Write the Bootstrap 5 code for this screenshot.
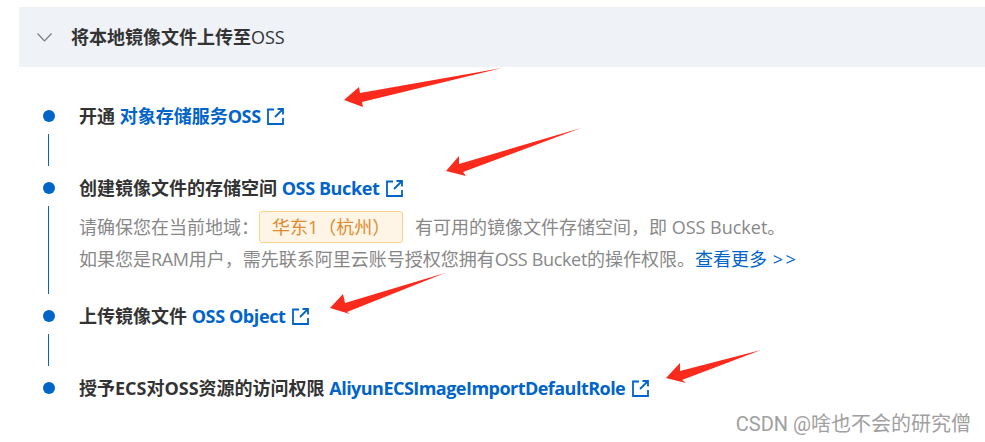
<!DOCTYPE html>
<html lang="zh-CN">
<head>
  <meta charset="UTF-8" />
  <meta name="viewport" content="width=device-width, initial-scale=1.0" />
  <title>将本地镜像文件上传至OSS</title>
  <link href="https://cdn.jsdelivr.net/npm/bootstrap@5.3.3/dist/css/bootstrap.min.css" rel="stylesheet">
  <style>
    html, body { height: 442px; overflow: hidden; }
    body {
      background: #fff;
      font-family: "Open Sans", "Noto Sans CJK SC", sans-serif;
      font-size: 18px;
      color: #333;
    }
    .page-wrap { padding: 7px 0 0 19px; }
    .panel-head {
      height: 60px;
      background: #eff2f7;
      padding-left: 18px;
      gap: 20px;
    }
    .panel-title { font-size: 18px; font-weight: 700; color: #333; margin-left: -1px; }
    .panel-title span { font-weight: 400; }
    .step-list { margin: 31px 0 0 43px; padding: 0; list-style: none; }
    .step-head { height: 36px; }
    .step-dot {
      width: 12px; height: 12px; border-radius: 50%;
      background: #0064c8; flex: none; margin-right: 24px;
    }
    .step-title { font-weight: 700; line-height: 36px; white-space: nowrap; }
    .step-title a, .more-link { color: #0064c8; text-decoration: none; }
    .tight-bold { letter-spacing: -.4px; }
    .tight-long { letter-spacing: -.53px; }
    .tight-text { letter-spacing: -.34px; }
    .ext-icon { width: 17px; height: 17px; margin-left: 2px; vertical-align: -2px; }
    .step-body { margin-left: 5px; padding-bottom: 4px; }
    .step-rail { width: 1px; background: #0064c8; flex: none; margin-right: 30px; }
    .step-copy { min-height: 32px; padding: 5px 0 19px; color: #888; }
    .copy-line { height: 32px; line-height: 32px; white-space: nowrap; }
    .region-tag {
      display: inline-block; height: 32px; line-height: 30px;
      padding: 0 12px; margin: 0 7px 0 0;
      background: #fff5e6; border: 1px solid #fbd38d; border-radius: 3px;
      color: #e08a2e;
    }
    .more-arrows { letter-spacing: 2.5px; margin-left: 1px; }
    .arrow-layer { position: absolute; left: 0; top: 0; pointer-events: none; }
    .mark-text {
      position: absolute; right: 14px; top: 409px;
      font-family: "Roboto", "Noto Sans CJK SC", sans-serif;
      font-size: 20px; line-height: 30px; color: #a0a0a0;
    }
  </style>
</head>
<body>
  <div class="page-wrap">
    <div class="panel-head d-flex align-items-center">
      <svg width="15" height="9" viewBox="0 0 15 9"><path d="M.5.5l7 7.5 7-7.5" fill="none" stroke="#777" stroke-width="1.1"/></svg>
      <div class="panel-title">将本地镜像文件上传至<span>OSS</span></div>
    </div>
  </div>

  <ol class="step-list">
    <li>
      <div class="step-head d-flex align-items-center">
        <i class="step-dot"></i>
        <div class="step-title">开通 <a href="#">对象存储服务<span class="tight-bold">OSS</span> <svg class="ext-icon" viewBox="0 0 17 17"><use href="#ext"/></svg></a></div>
      </div>
      <div class="step-body d-flex"><div class="step-rail"></div><div class="step-copy"></div></div>
    </li>
    <li>
      <div class="step-head d-flex align-items-center">
        <i class="step-dot"></i>
        <div class="step-title">创建镜像文件的存储空间 <a href="#"><span class="tight-bold">OSS Bucket</span> <svg class="ext-icon" viewBox="0 0 17 17"><use href="#ext"/></svg></a></div>
      </div>
      <div class="step-body d-flex">
        <div class="step-rail"></div>
        <div class="step-copy">
          <div class="copy-line">请确保您在当前地域：<span class="region-tag">华东1（杭州）</span> 有可用的镜像文件存储空间，即 OSS Bucket。</div>
          <div class="copy-line">如果您是<span class="tight-text">RAM</span>用户，需先联系阿里云账号授权您拥有<span class="tight-text">OSS Bucket</span>的操作权限。<a class="more-link" href="#">查看更多 <span class="more-arrows">&gt;&gt;</span></a></div>
        </div>
      </div>
    </li>
    <li>
      <div class="step-head d-flex align-items-center">
        <i class="step-dot"></i>
        <div class="step-title">上传镜像文件 <a href="#"><span class="tight-bold">OSS Object</span> <svg class="ext-icon" viewBox="0 0 17 17"><use href="#ext"/></svg></a></div>
      </div>
      <div class="step-body d-flex"><div class="step-rail"></div><div class="step-copy"></div></div>
    </li>
    <li>
      <div class="step-head d-flex align-items-center">
        <i class="step-dot"></i>
        <div class="step-title">授予ECS对OSS资源的访问权限 <a href="#"><span class="tight-long">AliyunECSImageImportDefaultRole</span> <svg class="ext-icon" viewBox="0 0 17 17"><use href="#ext"/></svg></a></div>
      </div>
    </li>
  </ol>

  <div class="mark-text">CSDN @啥也不会的研究僧</div>

  <!-- hand-drawn annotation arrows on top of the screenshot -->
  <svg class="arrow-layer" width="985" height="442" viewBox="0 0 985 442">
    <defs>
      <g id="ext" fill="none" stroke="#0064c8" stroke-width="1.8">
        <path d="M7 1.5H1v14.5h15V10"/>
        <path d="M10.5 1h5.5v5.5M16 1L8 9"/>
      </g>
    </defs>
    <g fill="#fa2a1c">
      <polygon points="344,100 359,87 360,93 502,68 362,102 363,107"/>
      <polygon points="446,171 459,156 459,164 581,128 463,172 466,176"/>
      <polygon points="330,308 343,294 345,303 445,273 347,312 350,314"/>
      <polygon points="666,378 680,363 680,371 761,350 682,380 686,383"/>
    </g>
  </svg>
  <script src="https://cdn.jsdelivr.net/npm/bootstrap@5.3.3/dist/js/bootstrap.bundle.min.js"></script>
</body>
</html>
